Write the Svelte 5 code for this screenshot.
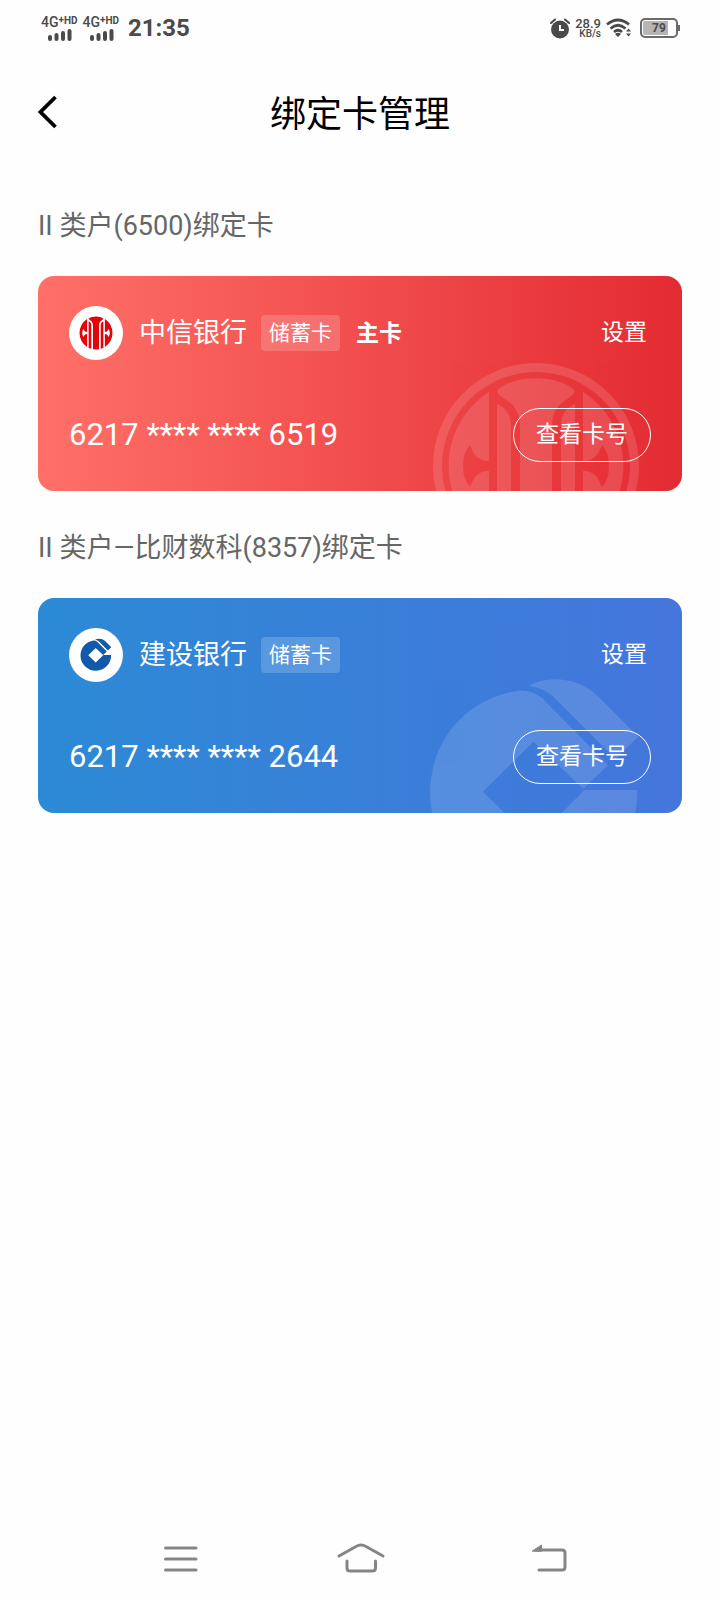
<script>
  const sections = [
    {
      title: 'II 类户(6500)绑定卡',
      bank: '中信银行',
      logo: 'citic',
      kind: '储蓄卡',
      primary: true,
      number: '6217 **** **** 6519'
    },
    {
      title: 'II 类户—比财数科(8357)绑定卡',
      bank: '建设银行',
      logo: 'ccb',
      kind: '储蓄卡',
      primary: false,
      number: '6217 **** **** 2644'
    }
  ];
</script>

{#snippet signal()}
  <div class="signal">
    <span class="net">4G<sup>+</sup><small>HD</small></span>
    <svg width="24" height="12" viewBox="0 0 24 12" aria-hidden="true">
      <path d="M2 8v2M8.500 6v4M15 4v6M21.500 2v8" stroke="#4a4a4a" stroke-width="4" stroke-linecap="round" />
    </svg>
  </div>
{/snippet}

{#snippet citic()}
  <path d="M-39-75C-24-92 24-92 39-75C37-66 16-66 16-40V86Q0 90-16 86V-40C-16-66-37-66-39-75Z" />
  <path d="M-39-62C-30-58-25-52-25-40V84L-39 79ZM39-62C30-58 25-52 25-40V84L39 79Z" />
  <path d="M-47-74A88 88 0 0 0-47 74V5C-58 5-62 11-66 21Q-73 14-73 0Q-73-14-66-21C-62-11-58-5-47-5Z" />
  <path d="M47-74A88 88 0 0 1 47 74V5C58 5 62 11 66 21Q73 14 73 0Q73-14 66-21C62-11 58-5 47-5Z" />
{/snippet}

{#snippet ccb()}
  <path d="M385 288Q420 268 465 268C530 269 570 295 600 325L715 440L646 506L460 320Q430 292 385 288Z" />
  <path d="M712 600H554L400 752L248 605L400 455L550 596L624 526L430 328Q400 300 355 302C200 325 90 450 90 612A311 311 0 0 0 712 600Z" />
{/snippet}

<div class="screen">
  <div class="status">
    <div class="cluster">
      {@render signal()}
      {@render signal()}
      <time>21:35</time>
    </div>
    <div class="cluster right">
      <svg width="20" height="21" viewBox="0 0 20 21" aria-hidden="true">
        <circle cx="10" cy="11.500" r="9" fill="#4a4a4a" />
        <path d="M1 5L5 1.500M19 5L15 1.500" stroke="#4a4a4a" stroke-width="2" stroke-linecap="round" />
        <path d="M10 7v5h4" fill="none" stroke="#fff" stroke-width="2" />
      </svg>
      <span class="speed">28.9<small>KB/s</small></span>
      <svg width="26" height="20" viewBox="0 0 26 20" aria-hidden="true">
        <g fill="none" stroke="#4a4a4a" stroke-width="2.800">
          <path d="M1 6.500Q12 -2.500 23 6.500" />
          <path d="M4.500 10.500Q12 4 19.500 10.500" />
          <path d="M8 14Q12 10.500 16 14" />
        </g>
        <path d="M9 16Q12 13.500 15 16L12 19ZM20 13.500L22.500 10.500L25 13.500ZM20 15.500H25L22.500 18.500Z" fill="#4a4a4a" />
      </svg>
      <div class="battery"><span>79</span></div>
    </div>
  </div>

  <header>
    <button class="back" aria-label="返回">
      <svg width="20" height="34" viewBox="0 0 20 34" aria-hidden="true">
        <path d="M17.500 2L2.500 17L17.500 32" fill="none" stroke="#000" stroke-width="3.800" />
      </svg>
    </button>
    <h1>绑定卡管理</h1>
  </header>

  <main>
    {#each sections as s}
      <section>
        <h2>{s.title}</h2>
        <article class="card {s.logo}">
          {#if s.logo === 'citic'}
            <svg class="mark" viewBox="-103 -103 206 128" width="206" height="128" aria-hidden="true">
              <circle r="98.500" fill="none" stroke="#fff" stroke-width="9" />
              <g fill="#fff">{@render citic()}</g>
            </svg>
          {:else}
            <svg class="mark" viewBox="90 267 627 402" width="209" height="134" aria-hidden="true">
              <g fill="#fff">{@render ccb()}</g>
            </svg>
          {/if}
          <div class="row">
            <span class="logo">
              {#if s.logo === 'citic'}
                <svg viewBox="-90 -90 180 180" width="34" height="34" aria-hidden="true">
                  <g fill="#e3040b">{@render citic()}</g>
                </svg>
              {:else}
                <svg viewBox="80 258 650 680" width="32" height="34" aria-hidden="true">
                  <g fill="#125aa9">{@render ccb()}</g>
                </svg>
              {/if}
            </span>
            <span class="bank">{s.bank}</span>
            <span class="kind">{s.kind}</span>
            {#if s.primary}<strong>主卡</strong>{/if}
            <button class="settings">设置</button>
          </div>
          <div class="row">
            <span class="number">{s.number}</span>
            <button class="reveal">查看卡号</button>
          </div>
        </article>
      </section>
    {/each}
  </main>

  <nav>
    <button aria-label="菜单">
      <svg width="60" height="40" viewBox="0 0 60 40" aria-hidden="true">
        <path d="M15.500 9H46M15.500 20H46M15.500 31H46" />
      </svg>
    </button>
    <button aria-label="主页">
      <svg width="60" height="40" viewBox="0 0 60 40" aria-hidden="true">
        <path d="M9 17L26 7.500Q31 4.500 36 7.500L53 17M17 22V29Q17 32 20 32H42.500Q45.500 32 45.500 29V22" />
      </svg>
    </button>
    <button aria-label="后退">
      <svg width="60" height="40" viewBox="0 0 60 40" aria-hidden="true">
        <path d="M26 11H52Q55 11 55 14V28Q55 31 52 31H29" />
        <path class="tip" d="M22.500 12L31.500 6V12Z" />
      </svg>
    </button>
  </nav>
</div>

<style>
  :global(body) {
    margin: 0;
    background: #fefefe;
  }
  .screen {
    min-height: 100vh;
    display: flex;
    flex-direction: column;
    font-family: Roboto, 'Noto Sans CJK SC', sans-serif;
    color: #000;
  }
  button {
    border: 0;
    padding: 0;
    background: none;
    color: inherit;
    font: inherit;
  }
  svg {
    display: block;
    flex: none;
  }
  .status {
    display: flex;
    justify-content: space-between;
    align-items: center;
    height: 56px;
    padding: 0 42px 0 41px;
    color: #4a4a4a;
  }
  .cluster {
    display: flex;
    align-items: center;
    gap: 5px;
  }
  .signal {
    display: flex;
    flex-direction: column;
    align-items: center;
  }
  .signal svg {
    margin-left: 2px;
  }
  .net {
    display: flex;
    font-size: 14px;
    line-height: 13px;
    font-weight: 500;
  }
  .net sup {
    font-size: 10px;
    line-height: 8px;
    font-weight: 700;
  }
  .net small {
    font-size: 10px;
    line-height: 10px;
    font-weight: 700;
  }
  time {
    margin-left: 4px;
    font-size: 24px;
    line-height: 28px;
    font-weight: 700;
  }
  .speed {
    display: flex;
    flex-direction: column;
    align-items: flex-end;
    font-size: 13px;
    line-height: 11px;
    font-weight: 500;
  }
  .speed small {
    font-size: 10px;
    line-height: 10px;
  }
  .battery {
    position: relative;
    display: grid;
    place-items: center;
    box-sizing: border-box;
    width: 38px;
    height: 20px;
    margin-left: 3px;
    border: 2px solid #6a6a6a;
    border-radius: 5px;
    background: linear-gradient(90deg, #b5b5b5 76%, #fff 76%);
    box-shadow: inset 0 0 0 1px #fff;
    font-size: 12px;
    line-height: 14px;
    font-weight: 700;
  }
  .battery::after {
    content: '';
    position: absolute;
    right: -4px;
    top: 5px;
    width: 2px;
    height: 6px;
    background: #6a6a6a;
  }
  header {
    display: grid;
    grid-template-columns: 1fr auto 1fr;
    align-items: center;
    height: 112px;
    padding: 0 38px;
  }
  .back {
    justify-self: start;
  }
  h1 {
    margin: 0;
    padding-top: 5px;
    font-size: 36px;
    line-height: 54px;
    font-weight: 400;
  }
  main {
    flex: 1;
    padding: 19px 38px 0;
  }
  h2 {
    margin: 0;
    padding: 19px 0 30px;
    font-size: 27px;
    line-height: 40px;
    font-weight: 400;
    color: #666;
  }
  section + section h2 {
    padding-top: 37px;
  }
  .card {
    position: relative;
    overflow: hidden;
    display: flex;
    flex-direction: column;
    gap: 48px;
    padding: 30px 31px 29px;
    border-radius: 16px;
    color: #fff;
  }
  .card.citic {
    background: linear-gradient(90deg, #ff7068, #e32b32);
  }
  .card.ccb {
    background: linear-gradient(90deg, #2c8ad5, #4576dc);
  }
  .mark {
    position: absolute;
    right: 43px;
    bottom: 0;
    opacity: 0.13;
  }
  .row {
    position: relative;
    display: flex;
    align-items: center;
    height: 54px;
  }
  .logo {
    display: grid;
    place-items: center;
    width: 54px;
    height: 54px;
    border-radius: 50%;
    background: #fff;
  }
  .bank {
    margin: 0 14px 0 16px;
    font-size: 27px;
    line-height: 40px;
  }
  .kind {
    padding: 0 8px;
    border-radius: 4px;
    background: rgba(255, 255, 255, 0.18);
    font-size: 21px;
    line-height: 36px;
  }
  strong {
    margin-left: 16px;
    padding-top: 2px;
    font-size: 23px;
    line-height: 34px;
    font-weight: 700;
  }
  .settings {
    margin-left: auto;
    padding: 0 4px;
    font-size: 23px;
    line-height: 34px;
  }
  .number {
    font-size: 31px;
    line-height: 40px;
  }
  .reveal {
    margin-left: auto;
    height: 54px;
    padding: 0 22px;
    border: 1px solid #fff;
    border-radius: 27px;
    font-size: 23px;
    line-height: 34px;
  }
  nav {
    display: grid;
    grid-template-columns: repeat(3, 1fr);
    justify-items: center;
    padding: 0 90px 21px;
  }
  nav path {
    fill: none;
    stroke: #858585;
    stroke-width: 3;
    stroke-linecap: round;
  }
  nav .tip {
    fill: #858585;
    stroke-width: 1;
  }
</style>
